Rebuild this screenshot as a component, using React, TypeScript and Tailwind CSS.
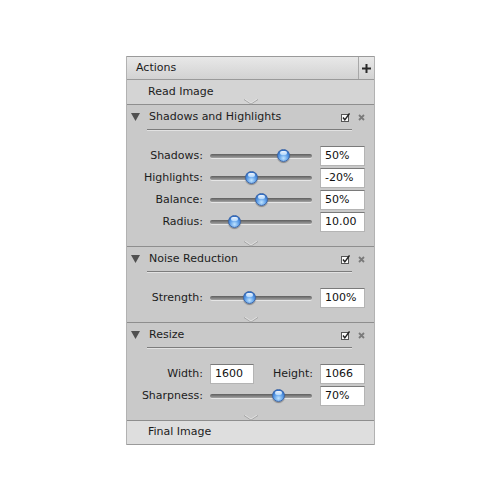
import type { ReactNode } from 'react';

// Blue aqua-style knob on a recessed track
function Slider({ value }: { value: number }) {
    return (
        <div className="relative w-[102px] h-[20px] flex items-center">
            <div className="w-full h-[4px] rounded-full bg-gradient-to-b from-[#5e5e5e] to-[#a4a4a4] shadow-[0_1px_0_#e6e6e6]" />
            <div
                className="absolute top-[3px] w-[13px] h-[13px] -ml-[6px] rounded-full border border-[#3b66a8] bg-[radial-gradient(circle_at_50%_75%,#bfe3ff_0%,#5d9ee8_45%,#2f6fc8_80%)] shadow-[0_1px_1px_rgba(0,0,0,0.35)]"
                style={{ left: `${value}%` }}
            >
                <div className="mx-auto mt-[1px] w-[7px] h-[4px] rounded-full bg-gradient-to-b from-white to-[#b8dcff] opacity-90" />
            </div>
        </div>
    );
}

function Field({ value, w = 'w-[45px]' }: { value: string; w?: string }) {
    return (
        <div className={`${w} h-[20px] bg-white border border-[#b4b4b4] border-t-[#7a7a7a] pl-[4px] flex items-center text-[#111]`}>
            {value}
        </div>
    );
}

function SliderRow({ label, value, pos }: { label: string; value: string; pos: number }) {
    return (
        <div className="flex items-center h-[20px]">
            <div className="w-[77px] text-right pr-[1px]">{label}</div>
            <div className="ml-[6px]"><Slider value={pos} /></div>
            <div className="ml-[8px]"><Field value={value} /></div>
        </div>
    );
}

// Small downward notch sitting on a row separator
function Notch() {
    return (
        <svg className="absolute left-1/2 -translate-x-1/2 -bottom-[1px]" width="14" height="6" viewBox="0 0 14 6">
            <polyline points="0,0.5 7,5 14,0.5" fill="none" stroke="#a6a6a6" strokeWidth="1" />
            <polyline points="1,0 7,4 13,0" fill="none" stroke="#e4e4e4" strokeWidth="0.8" />
        </svg>
    );
}

function Section({ title, children }: { title: string; children: ReactNode }) {
    return (
        <div className="relative border-b border-[#8e8e8e] bg-[#c9c9c9]">
            <div className="h-[24px] flex items-center">
                <svg className="ml-[4px]" width="9" height="8" viewBox="0 0 9 8">
                    <polygon points="0,0 9,0 4.5,8" fill="#505050" />
                </svg>
                <span className="ml-[9px] text-[#1c1c1c]">{title}</span>
                <svg className="ml-auto" width="9" height="9" viewBox="0 0 9 9">
                    <rect x="0.5" y="1.5" width="7" height="7" fill="#fafafa" stroke="#555" strokeWidth="1" />
                    <polyline points="2,4.5 3.8,6.8 8.5,0.5" fill="none" stroke="#222" strokeWidth="1.4" />
                </svg>
                <svg className="ml-[8px] mr-[9px]" width="7" height="7" viewBox="0 0 7 7">
                    <path d="M1 1L6 6M6 1L1 6" stroke="#7a7a7a" strokeWidth="1.8" />
                </svg>
            </div>
            <div className="ml-[20px] mr-[22px] border-b border-[#7c7c7c] shadow-[0_1px_0_#e2e2e2]" />
            <div className="pt-[16px] pb-[14px] flex flex-col gap-[2px]">{children}</div>
            <Notch />
        </div>
    );
}

export default function App() {
    return (
        <div className="w-[500px] h-[500px] bg-white pt-[56px] pl-[126px] font-['DejaVu_Sans',sans-serif] text-[11px] text-[#1c1c1c]">
            <div className="w-[249px] border-x border-[#b2b2b2]">
                {/* Actions header */}
                <div className="h-[24px] flex border-t border-b border-[#9a9a9a] bg-gradient-to-b from-[#e8e8e8] to-[#d2d2d2]">
                    <div className="flex-1 flex items-center pl-[9px] border-r border-[#a8a8a8]">Actions</div>
                    <div className="w-[15px] flex items-center justify-center">
                        <svg width="9" height="9" viewBox="0 0 9 9">
                            <path d="M4.5 0V9M0 4.5H9" stroke="#2a2a2a" strokeWidth="2" />
                        </svg>
                    </div>
                </div>
                <div className="relative h-[25px] flex items-center pl-[21px] bg-[#d4d4d4] border-b border-[#8e8e8e]">
                    Read Image
                    <Notch />
                </div>

                <Section title="Shadows and Highlights">
                    <SliderRow label="Shadows:" value="50%" pos={72} />
                    <SliderRow label="Highlights:" value="-20%" pos={40} />
                    <SliderRow label="Balance:" value="50%" pos={50} />
                    <SliderRow label="Radius:" value="10.00" pos={24} />
                </Section>

                <Section title="Noise Reduction">
                    <SliderRow label="Strength:" value="100%" pos={38} />
                </Section>

                <Section title="Resize">
                    <div className="flex items-center h-[20px]">
                        <div className="w-[77px] text-right pr-[1px]">Width:</div>
                        <div className="ml-[6px]"><Field value="1600" w="w-[44px]" /></div>
                        <div className="w-[60px] text-right pr-[1px]">Height:</div>
                        <div className="ml-[6px]"><Field value="1066" /></div>
                    </div>
                    <SliderRow label="Sharpness:" value="70%" pos={67} />
                </Section>

                <div className="h-[24px] flex items-center pl-[21px] bg-[#dedede] border-b border-[#9a9a9a]">
                    Final Image
                </div>
            </div>
        </div>
    );
}
